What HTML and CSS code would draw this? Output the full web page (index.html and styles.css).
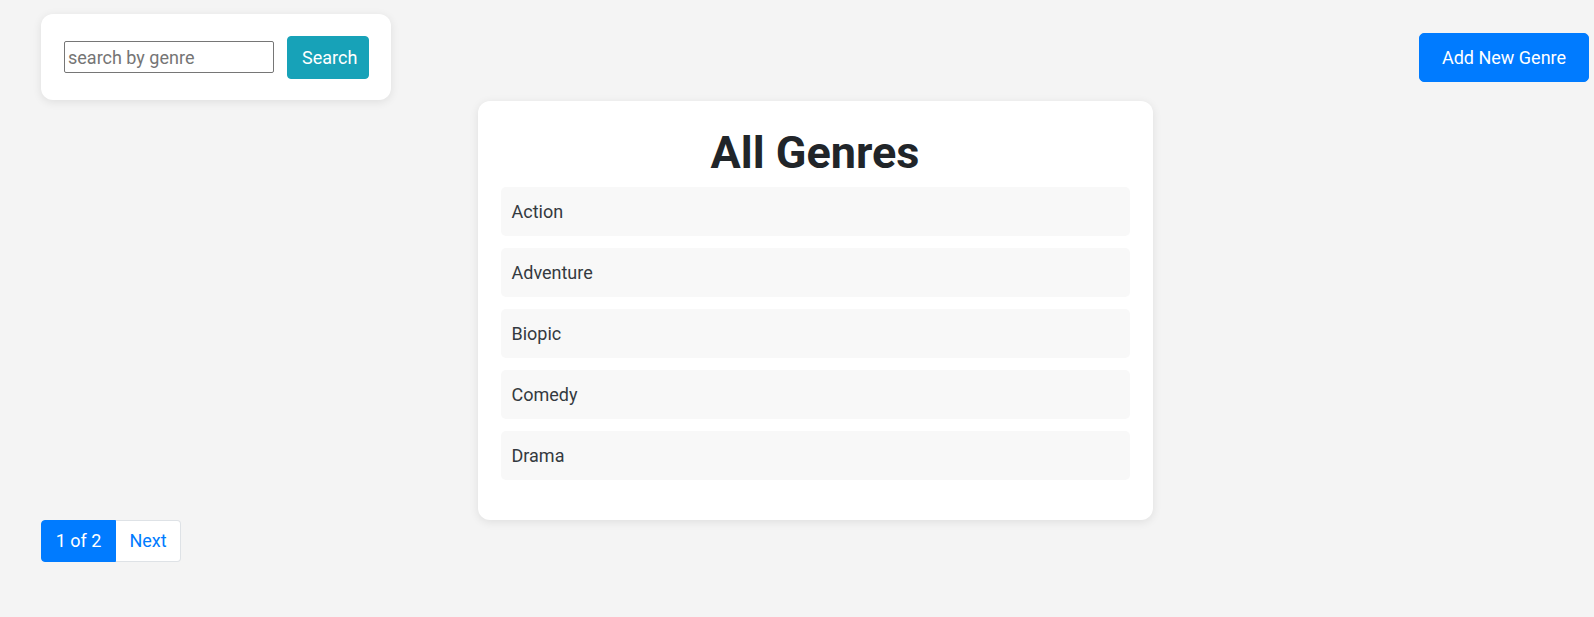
FILE: index.html
```html
<!DOCTYPE html>
<html lang="en">
<head>
<meta charset="utf-8">
<title>All Genres</title>
<link rel="stylesheet" href="styles.css">
</head>
<body>
<div class="page">
  <header class="header">
    <form class="search-card">
      <input class="search-input" type="text" placeholder="search by genre">
      <button class="btn btn-info" type="button">Search</button>
    </form>
    <button class="btn btn-primary btn-add" type="button">Add New Genre</button>
  </header>
  <main class="genres-card">
    <h1 class="title">All Genres</h1>
    <ul class="genre-list">
      <li class="genre-item">Action</li>
      <li class="genre-item">Adventure</li>
      <li class="genre-item">Biopic</li>
      <li class="genre-item">Comedy</li>
      <li class="genre-item">Drama</li>
    </ul>
  </main>
  <nav class="pagination">
    <span class="page-cell page-current">1 of 2</span>
    <a class="page-cell page-link" href="#">Next</a>
  </nav>
</div>
</body>
</html>
```
FILE: styles.css
```css
* { box-sizing: border-box; }
html, body {
  margin: 0;
  background: #f4f4f4;
  font-family: Roboto, "Liberation Sans", sans-serif;
  color: #212529;
}
.page {
  padding: 14px 5px 0 41px;
  display: flex;
  flex-direction: column;
}
.header {
  display: flex;
  justify-content: space-between;
  align-items: center;
}
.search-card {
  width: 350px;
  height: 86px;
  background: #fff;
  border-radius: 12px;
  box-shadow: 0 2px 10px rgba(0, 0, 0, 0.09);
  display: flex;
  align-items: center;
  gap: 13px;
  padding: 0 22px 0 23px;
  margin: 0;
}
.search-input {
  width: 210px;
  height: 32px;
  border: 1px solid #767676;
  border-radius: 2px;
  padding: 0 3px;
  font-family: inherit;
  font-size: 18px;
  color: #333;
  outline: none;
}
.search-input::placeholder { color: #757575; }
.btn {
  font-family: inherit;
  font-size: 18px;
  line-height: 27px;
  border: 1px solid transparent;
  border-radius: 4px;
  color: #fff;
  cursor: pointer;
}
.btn-info {
  background: #17a2b8;
  border-color: #17a2b8;
  padding: 7px 14px;
  width: 82px;
}
.btn-primary {
  background: #007bff;
  border-color: #007bff;
}
.btn-add {
  width: 170px;
  height: 49px;
  padding: 10px 0;
  border-radius: 5px;
  margin-top: 1px;
}
.genres-card {
  align-self: center;
  width: 675px;
  margin-top: 1px;
  background: #fff;
  border-radius: 12px;
  box-shadow: 0 2px 10px rgba(0, 0, 0, 0.09);
  padding: 25px 23px 40px;
}
.title {
  margin: 0 0 7px;
  font-size: 45px;
  line-height: 54px;
  font-weight: 700;
  text-align: center;
  color: #212529;
}
.genre-list {
  list-style: none;
  margin: 0;
  padding: 0;
  display: flex;
  flex-direction: column;
  gap: 12px;
}
.genre-item {
  background: #f8f8f8;
  border-radius: 5px;
  padding: 11px 11px;
  font-size: 18px;
  line-height: 27px;
  color: #343a40;
}
.pagination {
  display: flex;
  align-self: flex-start;
  margin-top: 0;
}
.page-cell {
  font-size: 18px;
  line-height: 26px;
  padding: 7px 0;
  border: 1px solid #dee2e6;
  text-align: center;
  text-decoration: none;
}
.page-current {
  width: 75px;
  background: #007bff;
  border-color: #007bff;
  color: #fff;
  border-radius: 4px 0 0 4px;
}
.page-link {
  width: 65px;
  background: #fff;
  color: #007bff;
  border-left: none;
  border-radius: 0 4px 4px 0;
}
```
